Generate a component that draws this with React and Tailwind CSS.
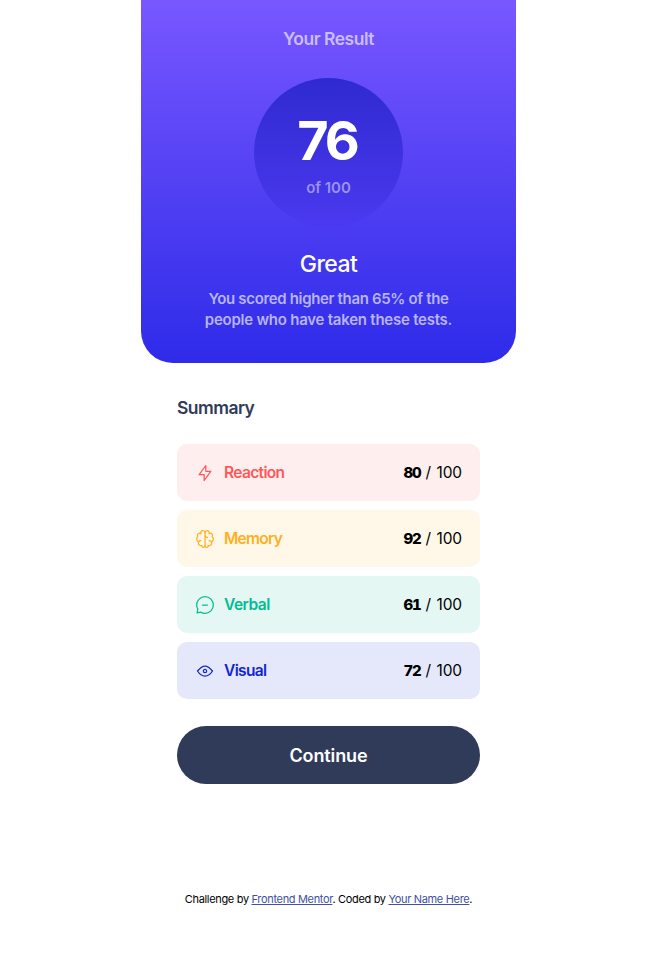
const categories = [
  {
    name: 'Reaction',
    score: 80,
    row: 'bg-[#ffeeee]',
    label: 'text-[#ff5757] tracking-[-0.65px]',
    paths: ['M10.833 8.333V2.5l-6.666 9.167h5V17.5l6.666-9.167h-5Z'],
  },
  {
    name: 'Memory',
    score: 92,
    row: 'bg-[#fff7e8]',
    label: 'text-[#ffb01f] tracking-[-0.7px]',
    paths: [
      'M5.833 11.667a2.5 2.5 0 1 0 .834 4.858',
      'M3.553 13.004a3.333 3.333 0 0 1-.728-5.53m.025-.067a2.083 2.083 0 0 1 2.983-2.824m.199.054A2.083 2.083 0 1 1 10 3.75v12.917a1.667 1.667 0 0 1-3.333 0M10 5.833a2.5 2.5 0 0 0 2.5 2.5m1.667 3.334a2.5 2.5 0 1 1-.834 4.858',
      'M16.447 13.004a3.334 3.334 0 0 0 .728-5.53m-.025-.067a2.083 2.083 0 0 0-2.983-2.824M10 3.75a2.083 2.083 0 1 1 3.967.887m-.634 12.03a1.667 1.667 0 0 1-3.333 0',
    ],
  },
  {
    name: 'Verbal',
    score: 61,
    row: 'bg-[#e4f7f3]',
    label: 'text-[#00bd91] tracking-[-0.5px]',
    paths: [
      'M7.5 10h5M10 18.333A8.333 8.333 0 1 0 1.667 10c0 1.518.406 2.942 1.115 4.167l-.699 3.75 3.75-.699A8.295 8.295 0 0 0 10 18.333Z',
    ],
  },
  {
    name: 'Visual',
    score: 72,
    row: 'bg-[#e5e8fb]',
    label: 'text-[#1125d4] tracking-[-0.65px]',
    paths: [
      'M10 11.667a1.667 1.667 0 1 0 0-3.334 1.667 1.667 0 0 0 0 3.334Z',
      'M17.5 10c-1.574 2.492-4.402 5-7.5 5s-5.926-2.508-7.5-5C4.416 7.632 6.66 5 10 5s5.584 2.632 7.5 5Z',
    ],
  },
];

function ScoreRow({ item }) {
  return (
    <li className={`flex h-[57px] items-center justify-between rounded-[10px] px-[18px] ${item.row}`}>
      <div className={`flex items-center gap-[9px] text-[15.5px] font-semibold ${item.label}`}>
        <svg
          className="size-5"
          viewBox="0 0 20 20"
          fill="none"
          stroke="currentColor"
          strokeWidth="1.25"
          strokeLinecap="round"
          strokeLinejoin="round"
        >
          {item.paths.map((d) => (
            <path key={d} d={d} />
          ))}
        </svg>
        <span>{item.name}</span>
      </div>
      <p className="flex items-baseline text-[15.5px] text-black">
        <span className="w-[22px] text-[15px] font-extrabold tracking-[-1px] tabular-nums">{item.score}</span>
        <span className="w-[11px]">/</span>
        <span className="tracking-[-0.1px]">100</span>
      </p>
    </li>
  );
}

export default function App() {
  return (
    <div className="flex min-h-screen flex-col items-center bg-white font-['Inter','Liberation_Sans',sans-serif]">
      <main className="w-[375px]">
        <section className="flex h-[363px] flex-col items-center rounded-b-[32px] bg-linear-to-b/srgb from-[#7857ff] to-[#2e2be9] text-center">
          <h1 className="mt-[25px] text-[17.5px] leading-7 font-semibold tracking-[-0.5px] text-[#cabdff]">Your Result</h1>
          <div className="mt-[25px] flex size-[149px] flex-col items-center rounded-full bg-linear-to-b/srgb from-[#2f2ad0] to-[#4b39ef]">
            <span className="mt-[35px] pr-[3px] text-[54px] leading-[56px] font-bold tracking-[-3px] text-white">76</span>
            <span className="mt-[7px] text-[15px] leading-6 font-semibold tracking-[-0.05px] text-[#9a91f0]">of 100</span>
          </div>
          <h2 className="mt-[21px] text-[23px] leading-8 font-medium tracking-[-0.6px] text-white">Great</h2>
          <p className="mt-2 text-[15px] leading-[21px] font-semibold text-[#b7b4fa]">
            <span className="tracking-[-0.34px]">You scored higher than 65% of the</span>
            <br />
            <span className="tracking-[-0.24px]">people who have taken these tests.</span>
          </p>
        </section>
        <section className="px-9 pt-[31px]">
          <h2 className="text-[17.5px] leading-7 font-semibold tracking-[-0.55px] text-[#303b5a]">Summary</h2>
          <ul className="mt-[22px] flex flex-col gap-[9px]">
            {categories.map((item) => (
              <ScoreRow key={item.name} item={item} />
            ))}
          </ul>
          <button className="mt-[27px] h-[58px] w-full rounded-full bg-[#303b5a] text-[18px] font-semibold tracking-[-0.1px] text-white">
            Continue
          </button>
        </section>
      </main>
      <footer className="mt-[107px] text-[11px] leading-4 tracking-[-0.33px] text-black">
        Challenge by{' '}
        <a href="#" className="text-[#3e52a3] underline">Frontend Mentor</a>. Coded by{' '}
        <a href="#" className="text-[#3e52a3] underline">Your Name Here</a>.
      </footer>
    </div>
  );
}
